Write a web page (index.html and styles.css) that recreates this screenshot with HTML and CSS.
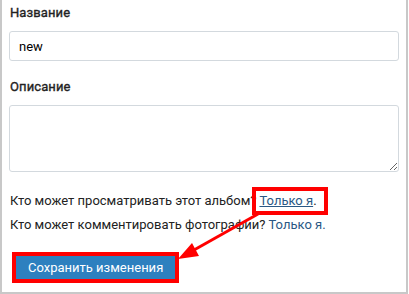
FILE: index.html
```html
<!DOCTYPE html>
<html lang="ru">
<head>
<meta charset="utf-8">
<link rel="stylesheet" href="styles.css">
</head>
<body>
<div class="frame">
  <div class="field">
    <div class="label">Название</div>
    <input class="input" type="text" value="new">
  </div>
  <div class="field field-desc">
    <div class="label">Описание</div>
    <textarea class="textarea"></textarea>
  </div>
  <div class="privacy">
    <div class="row">Кто может просматривать этот альбом? <span class="hl"><a class="link link-u" href="#">Только я</a>.</span></div>
    <div class="row">Кто может комментировать фотографии? <a class="link" href="#">Только я.</a></div>
  </div>
  <div class="actions">
    <button class="btn" type="button">Сохранить изменения</button>
  </div>
  <svg class="arrow" width="409" height="294" viewBox="0 0 409 294">
    <line x1="258" y1="214" x2="194" y2="250" stroke="#f00" stroke-width="3"/>
    <polygon points="178,259 192,243 199,256" fill="#f00"/>
  </svg>
</div>
</body>
</html>
```

FILE: styles.css
```css
html, body {
  margin: 0;
  padding: 0;
  background: #fff;
}

body {
  width: 409px;
  height: 294px;
  overflow: hidden;
  font-family: Roboto, "Noto Sans", Arial, sans-serif;
  font-size: 13px;
  color: #222;
}

.frame {
  position: relative;
  box-sizing: border-box;
  width: 408px;
  height: 294px;
  border-left: 2px solid #c8c8c8;
  border-right: 2px solid #c8c8c8;
  border-bottom: 2px solid #c8c8c8;
  padding: 5px 7px 0 7px;
}

.label {
  font-weight: 400;
  -webkit-text-stroke: 0.35px #222;
  letter-spacing: 0.1px;
  line-height: 16px;
  margin-bottom: 10px;
  padding-left: 1px;
  color: #222;
}

.field-desc {
  margin-top: 18px;
}

.input,
.textarea {
  display: block;
  box-sizing: border-box;
  width: 390px;
  margin: 0;
  border: 1px solid #d3d9de;
  border-radius: 3px;
  background: #fff;
  font-family: Roboto, "Noto Sans", Arial, sans-serif;
  font-size: 13px;
  color: #000;
  outline: none;
}

.input {
  height: 30px;
  padding: 0 9px;
}

.textarea {
  height: 67px;
  padding: 6px 9px;
  resize: vertical;
}

.privacy {
  margin-top: 17px;
  padding-left: 1px;
}

.row {
  line-height: 24px;
  white-space: nowrap;
}

.link {
  color: #2a5885;
  text-decoration: none;
}

.link-u {
  text-decoration: underline;
}

.hl {
  position: relative;
}

.hl::after {
  content: "";
  position: absolute;
  left: -7px;
  right: -11px;
  top: -6px;
  bottom: -7px;
  border: 4px solid #f00;
}

.actions {
  margin-top: 19px;
  padding-left: 7px;
}

.btn {
  display: block;
  height: 23px;
  padding: 0 12px;
  margin: 0;
  border: 0;
  border-radius: 0;
  background: #2d80bf;
  color: #fff;
  font-family: Roboto, "Noto Sans", Arial, sans-serif;
  font-size: 13px;
  line-height: 23px;
  outline: 4px solid #f00;
}

.arrow {
  position: absolute;
  left: -2px;
  top: 0;
  pointer-events: none;
}
```
